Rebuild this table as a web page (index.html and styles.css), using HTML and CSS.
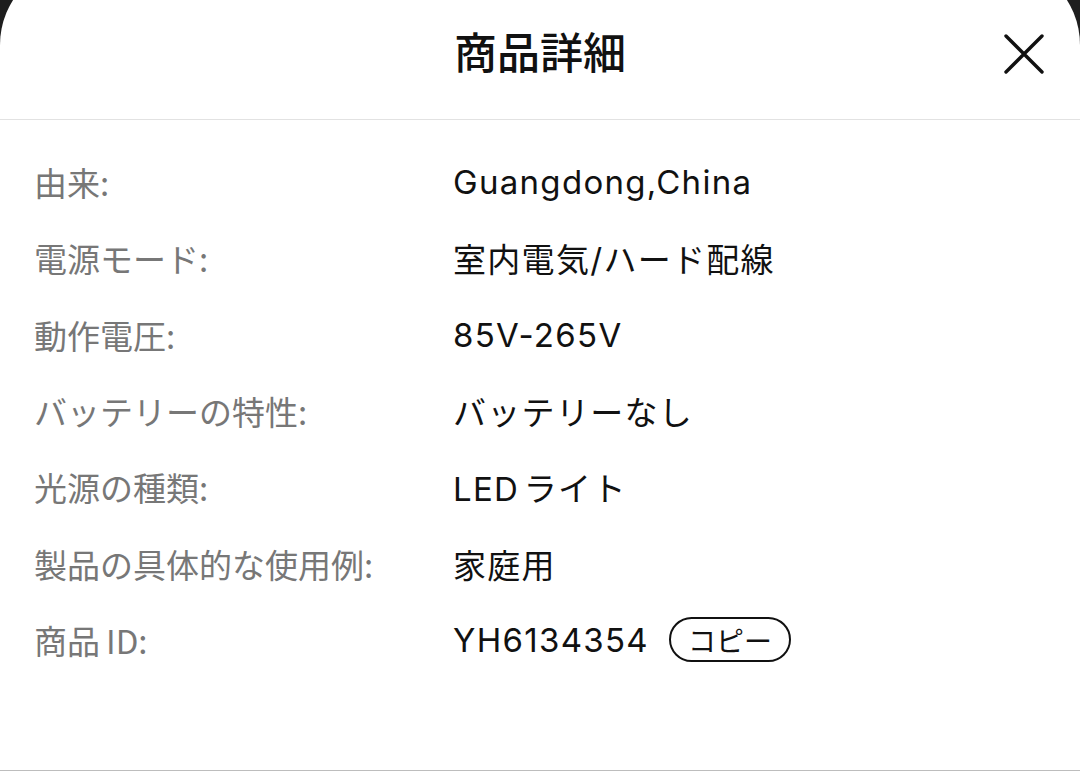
FILE: index.html
```html
<!DOCTYPE html>
<html lang="ja">
<head>
<meta charset="utf-8">
<link rel="stylesheet" href="styles.css">
</head>
<body>
<div class="sheet">
  <header class="header">
    <h1 class="title">商品詳細</h1>
    <button class="close" aria-label="閉じる">
      <svg width="40" height="40" viewBox="0 0 40 40"><path d="M2 2 L38 38 M38 2 L2 38" stroke="#111" stroke-width="3.4" stroke-linecap="round" fill="none"/></svg>
    </button>
  </header>
  <dl class="specs">
    <dt>由来:</dt><dd>Guangdong,China</dd>
    <dt>電源モード:</dt><dd>室内電気/ハード配線</dd>
    <dt>動作電圧:</dt><dd>85V-265V</dd>
    <dt>バッテリーの特性:</dt><dd>バッテリーなし</dd>
    <dt>光源の種類:</dt><dd>LED ライト</dd>
    <dt>製品の具体的な使用例:</dt><dd>家庭用</dd>
    <dt>商品<span class="id">ID:</span></dt><dd>YH6134354 <span class="copy">コピー</span></dd>
  </dl>
</div>
</body>
</html>
```

FILE: styles.css
```css
html, body {
  margin: 0;
  padding: 0;
  height: 100%;
  overflow: hidden;
}
body {
  background: #1e1e1e;
  font-family: "Inter", "Noto Sans CJK JP", sans-serif;
}
.sheet {
  margin-top: -39px;
  padding-top: 39px;
  height: 770px;
  background: #fff;
  border-radius: 84px 84px 0 0;
  border-bottom: 1px solid #bdbdbd;
  box-sizing: content-box;
}
.header {
  position: relative;
  height: 120px;
  border-bottom: 1px solid #e2e2e2;
  display: flex;
  align-items: center;
  justify-content: center;
  box-sizing: border-box;
}
.title {
  margin: 0;
  font-family: "Noto Sans CJK JP", sans-serif;
  font-size: 43px;
  font-weight: 500;
  color: #111;
  margin-top: -20px;
}
.close {
  position: absolute;
  right: 36px;
  top: 34px;
  width: 40px;
  height: 40px;
  padding: 0;
  border: 0;
  background: none;
  display: flex;
}
.specs {
  margin: 0;
  padding: 24px 0 0 34px;
  display: grid;
  grid-template-columns: 419px 1fr;
  grid-auto-rows: 76.3px;
  align-items: center;
  font-size: 33px;
}
.specs dt {
  color: #777;
  font-family: "Noto Sans CJK JP", sans-serif;
  font-weight: 400;
}
.id {
  margin-left: 6px;
}
.specs dd {
  margin: 0;
  color: #111;
  font-family: "Inter", "Noto Sans CJK JP", sans-serif;
  letter-spacing: 1.3px;
  word-spacing: -6px;
  display: flex;
  align-items: center;
  gap: 20px;
}
.copy {
  display: inline-flex;
  align-items: center;
  justify-content: center;
  width: 122px;
  height: 45px;
  box-sizing: border-box;
  border: 2px solid #111;
  border-radius: 23px;
  font-family: "Noto Sans CJK JP", sans-serif;
  font-size: 28px;
  letter-spacing: 0;
  word-spacing: 0;
  color: #111;
}
```
